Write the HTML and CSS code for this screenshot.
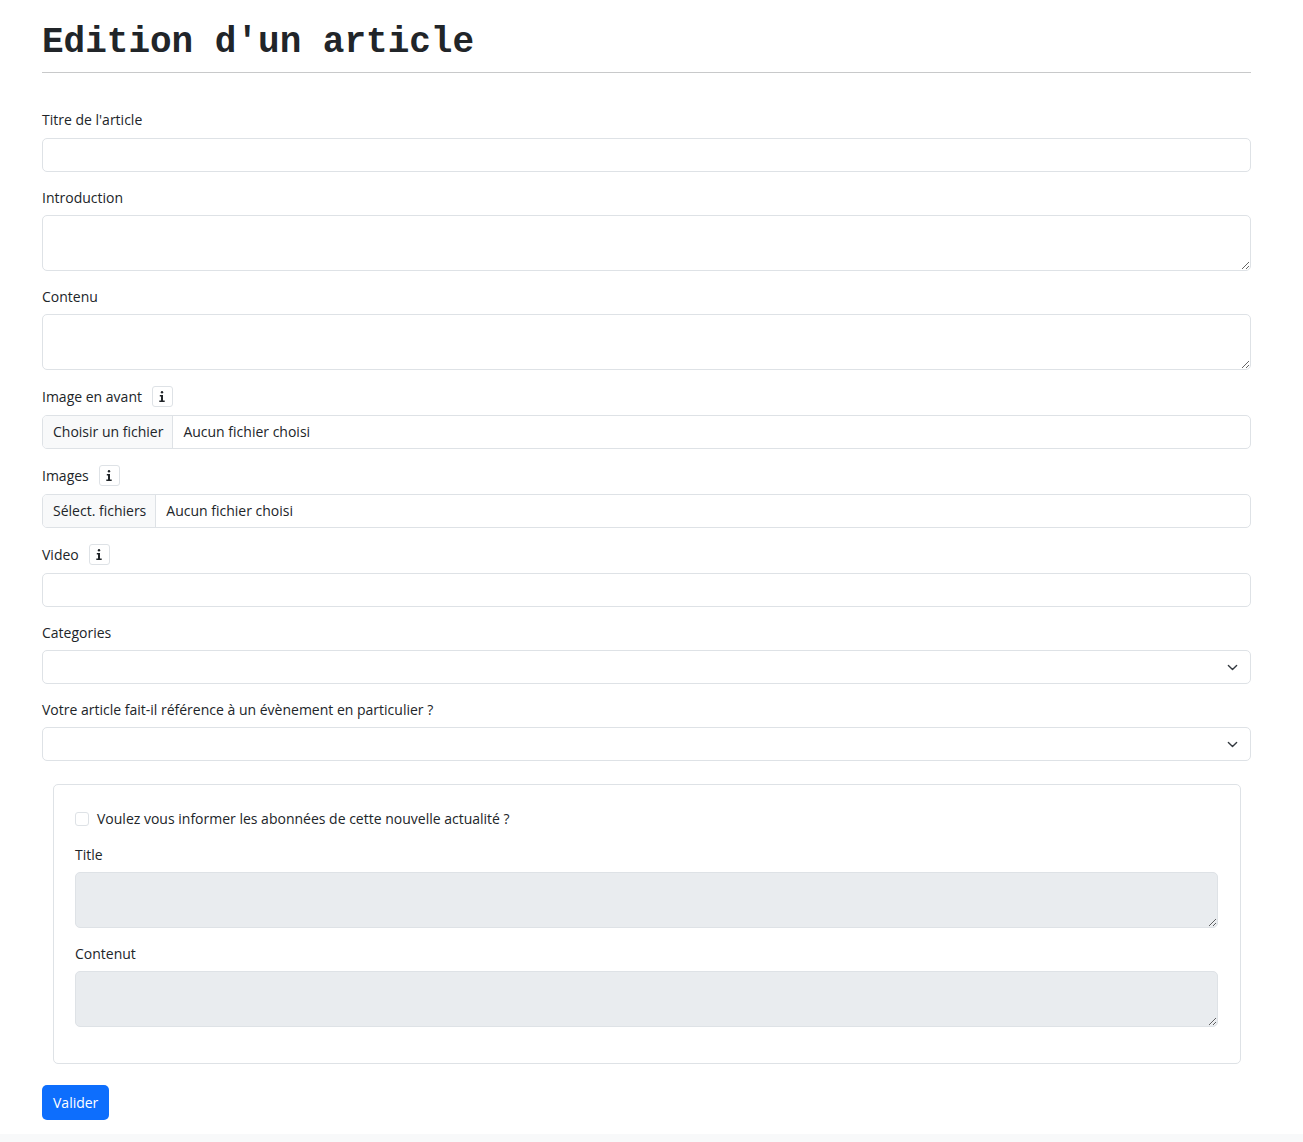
FILE: index.html
```html
<!DOCTYPE html>
<html lang="fr">
<head>
  <meta charset="utf-8">
  <meta name="viewport" content="width=device-width, initial-scale=1">
  <title>Edition d'un article</title>
  <link rel="stylesheet" href="styles.css">
</head>
<body>
  <main class="page">
    <h1 class="page-title">Edition d'un article</h1>
    <form class="form">
      <div class="field">
        <div class="field-head"><label for="titre">Titre de l'article</label></div>
        <input class="control" type="text" id="titre">
      </div>
      <div class="field">
        <div class="field-head"><label for="intro">Introduction</label></div>
        <textarea class="control area" id="intro"></textarea>
      </div>
      <div class="field">
        <div class="field-head"><label for="contenu">Contenu</label></div>
        <textarea class="control area" id="contenu"></textarea>
      </div>
      <div class="field">
        <div class="field-head with-info">
          <label for="image">Image en avant</label>
          <button class="info" type="button" aria-label="Informations"><svg width="6" height="11" viewBox="0 0 6 11" aria-hidden="true"><circle cx="3" cy="1.3" r="1.2"/><path d="M.8 3.9H4v5.5h1.7V11H.3V9.400H2V5.500H.8z"/></svg></button>
        </div>
        <div class="control file">
          <span class="file-button">Choisir un fichier</span>
          <span class="file-name">Aucun fichier choisi</span>
          <input class="file-input" type="file" id="image">
        </div>
      </div>
      <div class="field">
        <div class="field-head with-info">
          <label for="images">Images</label>
          <button class="info" type="button" aria-label="Informations"><svg width="6" height="11" viewBox="0 0 6 11" aria-hidden="true"><circle cx="3" cy="1.3" r="1.2"/><path d="M.8 3.9H4v5.5h1.7V11H.3V9.400H2V5.500H.8z"/></svg></button>
        </div>
        <div class="control file">
          <span class="file-button">Sélect. fichiers</span>
          <span class="file-name">Aucun fichier choisi</span>
          <input class="file-input" type="file" id="images" multiple>
        </div>
      </div>
      <div class="field">
        <div class="field-head with-info">
          <label for="video">Video</label>
          <button class="info" type="button" aria-label="Informations"><svg width="6" height="11" viewBox="0 0 6 11" aria-hidden="true"><circle cx="3" cy="1.3" r="1.2"/><path d="M.8 3.9H4v5.5h1.7V11H.3V9.400H2V5.500H.8z"/></svg></button>
        </div>
        <input class="control" type="text" id="video">
      </div>
      <div class="field">
        <div class="field-head"><label for="categories">Categories</label></div>
        <div class="select">
          <select class="control" id="categories"><option></option></select>
          <svg class="chevron" width="11" height="11" viewBox="0 0 16 16" aria-hidden="true"><path d="m2 5 6 6 6-6"/></svg>
        </div>
      </div>
      <div class="field">
        <div class="field-head"><label for="evenement">Votre article fait-il référence à un évènement en particulier ?</label></div>
        <div class="select">
          <select class="control" id="evenement"><option></option></select>
          <svg class="chevron" width="11" height="11" viewBox="0 0 16 16" aria-hidden="true"><path d="m2 5 6 6 6-6"/></svg>
        </div>
      </div>
      <section class="notify">
        <div class="check">
          <input class="check-input" type="checkbox" id="informer">
          <label for="informer">Voulez vous informer les abonnées de cette nouvelle actualité ?</label>
        </div>
        <div class="field">
          <div class="field-head"><label for="mail-title">Title</label></div>
          <textarea class="control area" id="mail-title" disabled></textarea>
        </div>
        <div class="field">
          <div class="field-head"><label for="mail-content">Contenut</label></div>
          <textarea class="control area" id="mail-content" disabled></textarea>
        </div>
      </section>
      <button class="submit" type="submit">Valider</button>
    </form>
  </main>
  <footer class="footer"></footer>
</body>
</html>
```
FILE: styles.css
```css
*, *::before, *::after { box-sizing: border-box; }

body {
  margin: 0;
  background: #fff;
  color: #212529;
  font: 14px/21px "Open Sans", "Noto Sans", sans-serif;
}

.page { padding: 21px 52px 14px 42px; }

.page-title {
  margin: 0 0 36px;
  padding-bottom: 8px;
  border-bottom: 1px solid #c8c9ca;
  font: bold 36px/43px "Courier New", "Liberation Mono", monospace;
}

.form {
  display: flex;
  flex-direction: column;
  gap: 15px;
}

.field {
  display: flex;
  flex-direction: column;
  gap: 8px;
}

.field-head {
  display: flex;
  align-items: center;
  gap: 10px;
  height: 20px;
}

.field:first-child .field-head { height: 21px; }

.with-info { height: 22px; }

.info {
  display: flex;
  align-items: center;
  justify-content: center;
  width: 21px;
  height: 21px;
  padding: 0;
  border: 1px solid #dee2e6;
  border-radius: 3px;
  background: #fff;
  fill: #212529;
}

.control {
  display: block;
  width: 100%;
  height: 34px;
  margin: 0;
  padding: 5px 11px;
  border: 1px solid #dee2e6;
  border-radius: 5px;
  background: #fff;
  color: inherit;
  font: inherit;
}

.area {
  height: 56px;
  min-height: 56px;
  resize: vertical;
}

.area:disabled { background: #e9ecef; }

.file {
  display: flex;
  position: relative;
  padding: 0;
  overflow: hidden;
  line-height: 32px;
}

.file-button {
  padding: 0 9px 0 10px;
  border-right: 1px solid #dee2e6;
  background: #f8f9fa;
}

.file-name { padding-left: 10px; }

.file-input {
  position: absolute;
  inset: 0;
  width: 100%;
  opacity: 0;
}

.select { position: relative; }
.select .control { appearance: none; }

.chevron {
  position: absolute;
  top: 12px;
  right: 13px;
  fill: none;
  stroke: #343a40;
  stroke-width: 2;
  stroke-linecap: round;
  stroke-linejoin: round;
  pointer-events: none;
}

.notify {
  display: flex;
  flex-direction: column;
  gap: 15px;
  margin: 8px 10px 6px 11px;
  padding: 23px 22px 36px 21px;
  border: 1px solid #dee2e6;
  border-radius: 5px;
}

.check {
  display: flex;
  align-items: center;
  gap: 8px;
}

.check-input {
  appearance: none;
  width: 14px;
  height: 14px;
  margin: 0;
  border: 1px solid #dee2e6;
  border-radius: 3px;
}

.check-input:checked { background: #0d6efd; }

.submit {
  align-self: flex-start;
  height: 35px;
  padding: 0 11px;
  border: 0;
  border-radius: 5px;
  background: #0d6efd;
  color: #fff;
  font: inherit;
}

.footer {
  height: 8px;
  background: #f8f9fa;
}
```
